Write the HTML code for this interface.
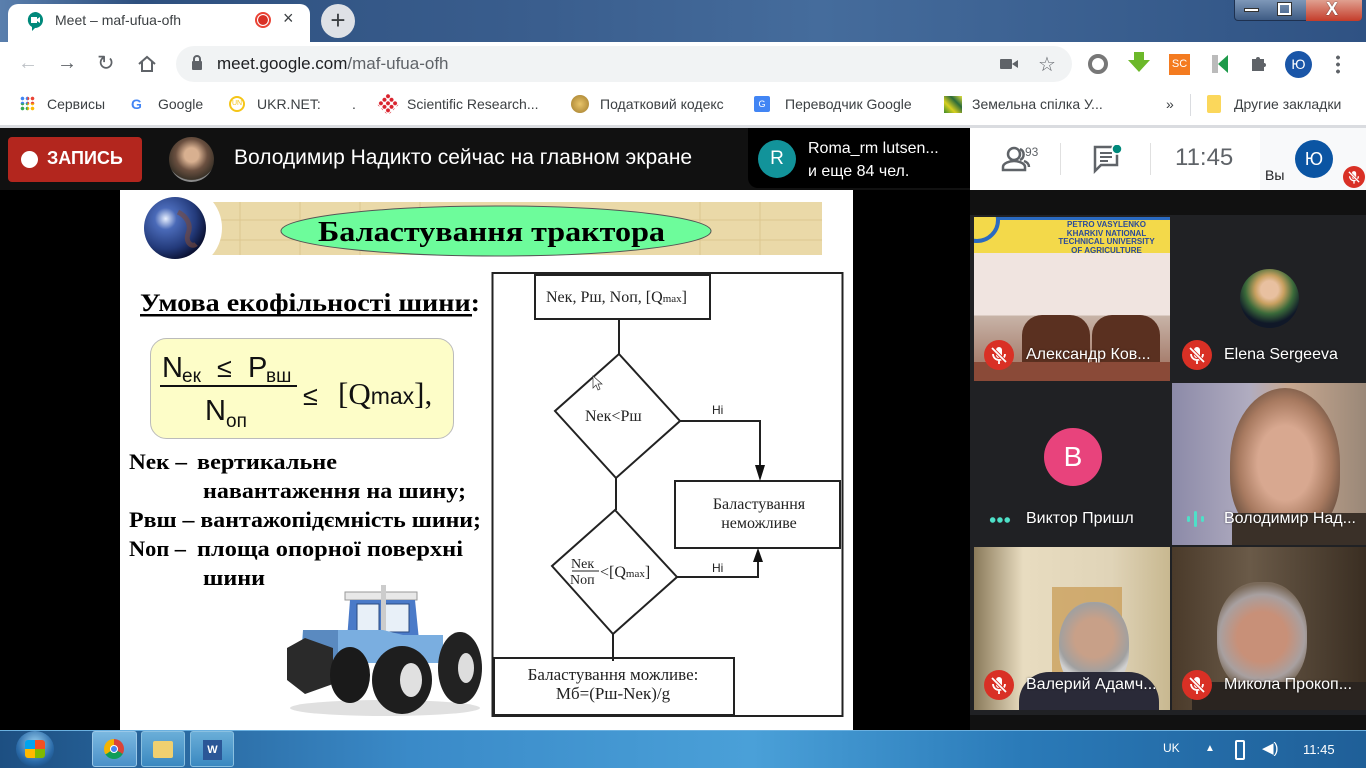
<!DOCTYPE html>
<html><head><meta charset="utf-8"><style>
*{margin:0;padding:0;box-sizing:border-box}
body{width:1366px;height:768px;overflow:hidden;position:relative;background:#000;font-family:"Liberation Sans",sans-serif}
.a{position:absolute}
.bm{position:absolute;top:96px;font-size:14px;color:#3c4043}
.tile{position:absolute;overflow:hidden}
.nm{position:absolute;color:#fff;font-size:16px;font-weight:500;white-space:nowrap;text-shadow:0 0 2px rgba(0,0,0,.5)}
.mic{position:absolute;width:30px;height:30px}
</style></head><body>
<svg width="0" height="0" style="position:absolute"><defs><g id="mic"><circle cx="15" cy="15" r="15" fill="#d93025"/><rect x="12" y="7" width="6" height="11" rx="3" fill="#fff"/><path d="M9 14a6 6 0 0 0 12 0M15 20v4" fill="none" stroke="#fff" stroke-width="1.8"/><path d="M8 8l14 14" stroke="#d93025" stroke-width="3.5"/><path d="M8 8l14 14" stroke="#fff" stroke-width="1.8"/></g></defs></svg>
<!-- tab strip -->
<div class="a" style="left:0;top:0;width:1366px;height:42px;background:linear-gradient(90deg,#5a7fad 0%,#2e507f 10%,#3a5e8e 40%,#456c9c 60%,#2f5283 100%)"></div>
<div class="a" style="left:8px;top:4px;width:302px;height:40px;background:#fff;border-radius:10px 10px 0 0"></div>
<svg class="a" style="left:26px;top:11px" width="18" height="20" viewBox="0 0 18 20"><path d="M9 1a8 8 0 0 1 0 16l-3 3v-4A8 8 0 0 1 9 1z" fill="#00897b"/><rect x="5" y="6" width="6" height="6" fill="#fff"/><path d="M11 8l3-2v6l-3-2z" fill="#fff"/></svg>
<div class="a" style="left:55px;top:12px;font-size:14px;color:#3c4043">Meet – maf-ufua-ofh</div>
<div class="a" style="left:255px;top:12px;width:16px;height:16px;border-radius:50%;border:2px solid #ea4335;background:radial-gradient(#d93025 55%,#fff 60%)"></div>
<div class="a" style="left:283px;top:8px;font-size:18px;color:#3c4043">×</div>
<div class="a" style="left:321px;top:4px;width:34px;height:34px;border-radius:50%;background:#dee1e6;text-align:center;font-size:26px;line-height:32px;color:#3c4043">+</div>
<div class="a" style="left:1234px;top:0;width:128px;height:21px;border:1px solid #1e3150;border-top:0;border-radius:0 0 4px 4px;background:linear-gradient(#7e97b8,#3e5b84)"></div>
<div class="a" style="left:1306px;top:0;width:56px;height:21px;border-radius:0 0 4px 0;background:linear-gradient(#e0a090,#c43c2a)"></div>
<div class="a" style="left:1244px;top:8px;width:15px;height:4px;background:#fff;border:1px solid #333"></div>
<div class="a" style="left:1278px;top:3px;width:13px;height:12px;border:2px solid #fff;outline:1px solid #333"></div>
<div class="a" style="left:1326px;top:-1px;font-size:18px;font-weight:bold;color:#fff;text-shadow:0 0 1px #000">X</div>
<!-- address row -->
<div class="a" style="left:0;top:42px;width:1366px;height:86px;background:#fff"></div>
<div class="a" style="left:18px;top:52px;font-size:20px;color:#bdc1c6">←</div>
<div class="a" style="left:57px;top:52px;font-size:20px;color:#5f6368">→</div>
<div class="a" style="left:97px;top:51px;font-size:21px;color:#5f6368">↻</div>
<svg class="a" style="left:137px;top:55px" width="20" height="18"><path d="M2 9L10 2l8 7M5 7v9h10V7" fill="none" stroke="#5f6368" stroke-width="2"/></svg>
<div class="a" style="left:176px;top:46px;width:896px;height:36px;border-radius:18px;background:#f1f3f4"></div>
<svg class="a" style="left:191px;top:55px" width="12" height="16"><rect x="1" y="6" width="10" height="9" rx="1" fill="#5f6368"/><path d="M3 7V4a3 3 0 0 1 6 0v3" fill="none" stroke="#5f6368" stroke-width="2"/></svg>
<div class="a" style="left:217px;top:54px;font-size:17px;color:#202124">meet.google.com<span style="color:#5f6368">/maf-ufua-ofh</span></div>
<svg class="a" style="left:1000px;top:58px" width="18" height="12"><rect x="0" y="1" width="12" height="10" rx="1" fill="#5f6368"/><path d="M12 6l6-4v8z" fill="#5f6368"/></svg>
<div class="a" style="left:1038px;top:52px;font-size:20px;color:#5f6368">☆</div>
<div class="a" style="left:1088px;top:54px;width:20px;height:20px;border-radius:50%;border:4px solid #777"></div>
<svg class="a" style="left:1128px;top:52px" width="22" height="22"><path d="M6 0h10v8h6L11 20 0 8h6z" fill="#6cb82a"/></svg>
<div class="a" style="left:1169px;top:54px;width:21px;height:21px;background:#f47b20;color:#fff;font-size:11px;text-align:center;line-height:21px">SC</div>
<svg class="a" style="left:1210px;top:53px" width="20" height="22"><path d="M2 2h6v18H2z" fill="#bbb"/><path d="M8 11l10-9v18z" fill="#1e9a4a"/></svg>
<svg class="a" style="left:1250px;top:54px" width="18" height="18"><path d="M2 5h4a2 2 0 0 1 4 0h4v4a2 2 0 0 1 0 4v4H2z" fill="#5f6368"/></svg>
<div class="a" style="left:1285px;top:51px;width:27px;height:27px;border-radius:50%;background:#1a56a8;color:#fff;font-size:14px;text-align:center;line-height:27px">Ю</div>
<div class="a" style="left:1336px;top:54px;width:4px;height:20px;background:radial-gradient(circle,#5f6368 1.8px,transparent 2px) 0 0/4px 7px"></div>
<!-- bookmarks -->
<div class="a" style="left:20px;top:96px;width:15px;height:15px;background:conic-gradient(#ea4335 0 25%,#fbbc04 0 50%,#34a853 0 75%,#4285f4 0);-webkit-mask:radial-gradient(circle,#000 1.6px,transparent 2px) 0 0/5px 5px"></div>
<div class="bm" style="left:47px">Сервисы</div>
<div class="bm" style="left:131px;font-weight:bold;color:#4285f4">G</div>
<div class="bm" style="left:158px">Google</div>
<div class="a" style="left:229px;top:96px;width:16px;height:16px;border-radius:50%;border:2px solid #f5c518;font-size:7px;color:#f5c518;text-align:center;line-height:12px">UN</div>
<div class="bm" style="left:257px">UKR.NET:</div>
<div class="bm" style="left:352px">.</div>
<div class="a" style="left:380px;top:96px;width:16px;height:16px;background:radial-gradient(circle,#d9232d 1.8px,transparent 2.2px) 0 0/5px 5px;transform:rotate(45deg)"></div>
<div class="bm" style="left:407px">Scientific Research...</div>
<div class="a" style="left:571px;top:95px;width:18px;height:18px;border-radius:50%;background:radial-gradient(#e8c46a,#a07a2a)"></div>
<div class="bm" style="left:600px">Податковий кодекс</div>
<div class="a" style="left:754px;top:96px;width:16px;height:16px;background:#4285f4;border-radius:2px;color:#fff;font-size:9px;line-height:16px;text-align:center">G</div>
<div class="bm" style="left:785px">Переводчик Google</div>
<div class="a" style="left:944px;top:96px;width:18px;height:17px;background:linear-gradient(45deg,#3a8a2a,#d8d020,#2a6a3a,#e0e040)"></div>
<div class="bm" style="left:972px">Земельна спілка У...</div>
<div class="bm" style="left:1166px">»</div>
<div class="a" style="left:1190px;top:94px;width:1px;height:22px;background:#dadce0"></div>
<div class="a" style="left:1207px;top:95px;width:14px;height:18px;background:#fbd75b;border-radius:2px"></div>
<div class="bm" style="left:1234px">Другие закладки</div>
<div class="a" style="left:0;top:125px;width:1366px;height:3px;background:#dadce0"></div>
<!-- meet top bar -->
<div class="a" style="left:0;top:128px;width:1366px;height:62px;background:#111"></div>
<div class="a" style="left:8px;top:137px;width:134px;height:45px;border-radius:4px;background:#b3261e"></div>
<div class="a" style="left:21px;top:151px;width:17px;height:17px;border-radius:50%;background:#fff"></div>
<div class="a" style="left:47px;top:148px;font-size:18px;font-weight:bold;color:#fff">ЗАПИСЬ</div>
<div class="a" style="left:169px;top:137px;width:45px;height:45px;border-radius:50%;background:radial-gradient(circle at 50% 40%,#d8b090 20%,#6b5040 45%,#3a3228 70%,#8a8a8a 72%)"></div>
<div class="a" style="left:234px;top:146px;font-size:21px;color:#fff">Володимир Надикто сейчас на главном экране</div>
<div class="a" style="left:748px;top:128px;width:222px;height:60px;background:#000;border-radius:0 0 0 10px"></div>
<div class="a" style="left:758px;top:140px;width:38px;height:38px;border-radius:50%;background:#12939a;color:#fff;font-size:19px;text-align:center;line-height:38px">R</div>
<div class="a" style="left:808px;top:137px;font-size:16px;color:#fff;line-height:23px">Roma_rm lutsen...<br>и еще 84 чел.</div>
<div class="a" style="left:970px;top:128px;width:290px;height:62px;background:#fff"></div>
<div class="a" style="left:1260px;top:128px;width:106px;height:62px;background:#f8f9fa"></div>
<svg class="a" style="left:1000px;top:145px" width="44" height="28"><circle cx="14" cy="9" r="6" fill="none" stroke="#5f6368" stroke-width="2.5"/><path d="M3 25v-3c0-4 7-6 11-6s11 2 11 6v3z" fill="none" stroke="#5f6368" stroke-width="2.5"/><path d="M20 4a6 6 0 0 1 0 11M24 16c3 1 5 3 5 6" fill="none" stroke="#5f6368" stroke-width="2.5"/><text x="25" y="11" font-size="12" fill="#5f6368" font-family="Liberation Sans">93</text></svg>
<div class="a" style="left:1060px;top:143px;width:1px;height:32px;background:#e0e0e0"></div>
<svg class="a" style="left:1093px;top:145px" width="30" height="30"><path d="M2 2h22v18H8l-6 6z" fill="none" stroke="#5f6368" stroke-width="2.5"/><path d="M7 8h12M7 12h12M7 16h8" stroke="#5f6368" stroke-width="2"/><circle cx="24" cy="4" r="5" fill="#00897b" stroke="#fff" stroke-width="1.5"/></svg>
<div class="a" style="left:1150px;top:143px;width:1px;height:32px;background:#e0e0e0"></div>
<div class="a" style="left:1175px;top:144px;font-size:24px;color:#5f6368">11:45</div>
<div class="a" style="left:1295px;top:140px;width:38px;height:38px;border-radius:50%;background:#0b55a3;color:#fff;font-size:18px;text-align:center;line-height:38px">Ю</div>
<div class="a" style="left:1265px;top:167px;font-size:14px;color:#202124">Вы</div>
<svg class="mic" style="left:1343px;top:166px;width:22px;height:22px" viewBox="0 0 30 30"><use href="#mic"/></svg>
<!-- right panel -->
<div class="a" style="left:970px;top:190px;width:396px;height:540px;background:#111"></div>
<div class="a" style="left:970px;top:215px;width:396px;height:500px;background:#202124"></div>
<div class="tile" style="left:974px;top:217px;width:196px;height:164px;background:linear-gradient(#f0e4e0 0 60%,#c8b4a8 60%,#9a6a58 100%)">
 <div class="a" style="left:0;top:0;width:196px;height:36px;background:#f3d94a;border-top:3px solid #2a6ac0"></div>
 <div class="a" style="left:-20px;top:-20px;width:46px;height:46px;border-radius:50%;border:4px solid #2a6ac0;background:#f3d94a"></div>
 <div class="a" style="left:70px;top:4px;width:125px;font-size:8px;line-height:8.5px;font-weight:bold;color:#2a4a9a;text-align:center">PETRO VASYLENKO<br>KHARKIV NATIONAL<br>TECHNICAL UNIVERSITY<br>OF AGRICULTURE</div>
 <div class="a" style="left:48px;top:98px;width:68px;height:50px;background:#5a3020;border-radius:20px 20px 0 0"></div>
 <div class="a" style="left:118px;top:98px;width:68px;height:50px;background:#5a3020;border-radius:20px 20px 0 0"></div>
 <div class="a" style="left:0;top:145px;width:196px;height:19px;background:#8a4a38"></div>
</div>
<div class="tile" style="left:1172px;top:217px;width:194px;height:164px;background:#202124">
 <div class="a" style="left:68px;top:52px;width:59px;height:59px;border-radius:50%;background:radial-gradient(circle at 50% 35%,#e8c0a0 18%,#c8a060 30%,#3a6a3a 50%,#101828 70%)"></div>
</div>
<div class="tile" style="left:974px;top:383px;width:196px;height:162px;background:#202124">
 <div class="a" style="left:70px;top:45px;width:58px;height:58px;border-radius:50%;background:#e8437c;color:#fff;font-size:28px;text-align:center;line-height:58px">В</div>
</div>
<div class="tile" style="left:1172px;top:383px;width:194px;height:162px;background:linear-gradient(90deg,#8c8aa8,#b0acc0 40%,#c8a890 60%,#9a8878)">
 <div class="a" style="left:58px;top:5px;width:110px;height:150px;border-radius:50% 50% 40% 40%;background:radial-gradient(ellipse at 50% 50%,#d8a890 35%,#a87a60 60%,#6a5040 80%)"></div>
 <div class="a" style="left:60px;top:130px;width:134px;height:32px;background:#3a3028"></div>
</div>
<div class="tile" style="left:974px;top:547px;width:196px;height:163px;background:linear-gradient(90deg,#8a7a5a,#e8dcc0 25%,#e0d4b8 70%,#c8b890)">
 <div class="a" style="left:78px;top:40px;width:70px;height:90px;background:#c89850;opacity:.7"></div>
 <div class="a" style="left:85px;top:55px;width:70px;height:90px;border-radius:45%;background:radial-gradient(circle at 50% 40%,#c8a088 30%,#a0a0a0 55%,#d0d0d0 65%)"></div>
 <div class="a" style="left:45px;top:125px;width:140px;height:38px;background:#2a2a38;border-radius:30px 30px 0 0"></div>
</div>
<div class="tile" style="left:1172px;top:547px;width:194px;height:163px;background:linear-gradient(90deg,#4a3a2a,#6a5a48 40%,#3a2e22)">
 <div class="a" style="left:45px;top:35px;width:90px;height:110px;border-radius:45%;background:radial-gradient(circle at 50% 50%,#c89078 35%,#a8a0a0 60%,#7a6a5a 75%)"></div>
 <div class="a" style="left:20px;top:135px;width:174px;height:28px;background:#2a2420"></div>
</div>
<svg class="mic" style="left:984px;top:340px" viewBox="0 0 30 30"><use href="#mic"/></svg><div class="nm" style="left:1026px;top:346px">Александр Ков...</div>
<svg class="mic" style="left:1182px;top:340px" viewBox="0 0 30 30"><use href="#mic"/></svg><div class="nm" style="left:1224px;top:346px">Elena Sergeeva</div>
<div class="a" style="left:989px;top:517px;width:22px;height:6px;background:radial-gradient(circle,#4ee0c8 2.5px,transparent 3px) 0 0/7.3px 6px"></div>
<div class="nm" style="left:1026px;top:510px">Виктор Пришл</div>
<svg class="a" style="left:1186px;top:509px" width="20" height="20"><rect x="1" y="7" width="3" height="6" rx="1.5" fill="#4ee0c8"/><rect x="8" y="2" width="3" height="16" rx="1.5" fill="#4ee0c8"/><rect x="15" y="7" width="3" height="6" rx="1.5" fill="#4ee0c8"/></svg>
<div class="nm" style="left:1224px;top:510px">Володимир Над...</div>
<svg class="mic" style="left:984px;top:670px" viewBox="0 0 30 30"><use href="#mic"/></svg><div class="nm" style="left:1026px;top:676px">Валерий Адамч...</div>
<svg class="mic" style="left:1182px;top:670px" viewBox="0 0 30 30"><use href="#mic"/></svg><div class="nm" style="left:1224px;top:676px">Микола Прокоп...</div>
<!-- slide -->
<div class="a" style="left:120px;top:190px;width:733px;height:542px;background:#fff"></div>
<svg class="a" style="left:120px;top:190px" width="733" height="542" viewBox="120 190 733 542" font-family="Liberation Serif, serif">
 <defs><radialGradient id="gl" cx="0.35" cy="0.35" r="0.7"><stop offset="0" stop-color="#e8f0ff"/><stop offset="0.25" stop-color="#4a6ab8"/><stop offset="0.7" stop-color="#233a7a"/><stop offset="1" stop-color="#0a1030"/></radialGradient></defs>
 <rect x="208" y="202" width="614" height="53" fill="#ead9a8"/>
 <path d="M240 202v53M300 202v53M360 202v53M420 202v53M700 202v53M760 202v53M208 220h614M208 240h614" stroke="#dcc690" stroke-width="1"/>
 <circle cx="180" cy="228" r="42" fill="#fff"/>
 <circle cx="175" cy="228" r="31" fill="url(#gl)"/>
 <path d="M178 212c8 4 14 12 10 22-3 8 4 14 8 10" fill="none" stroke="#7a4a3a" stroke-width="5" opacity=".6"/>
 <ellipse cx="496" cy="231" rx="215" ry="25" fill="#6dfc9b" stroke="#555" stroke-width="1"/>
 <text x="318" y="241" font-size="29" font-weight="bold" textLength="347" lengthAdjust="spacingAndGlyphs">Баластування трактора</text>
 <text x="140" y="311" font-size="25" font-weight="bold" textLength="340" lengthAdjust="spacingAndGlyphs">Умова екофільності шини:</text>
 <rect x="140" y="314" width="332" height="2.5" fill="#000"/>
 <rect x="150.5" y="338.5" width="303" height="100" rx="16" fill="#fdfdc8" stroke="#bbb"/>
 <g font-family="Liberation Sans, sans-serif" fill="#111">
  <text x="162" y="377" font-size="29">N</text><text x="182" y="382" font-size="19">ек</text>
  <text x="217" y="377" font-size="27">≤</text>
  <text x="248" y="377" font-size="29">P</text><text x="266" y="382" font-size="19">вш</text>
  <rect x="160" y="385" width="137" height="2" fill="#111"/>
  <text x="205" y="420" font-size="29">N</text><text x="226" y="427" font-size="19">оп</text>
  <text x="303" y="405" font-size="27">≤</text>
 </g>
 <text x="338" y="404" font-size="31" fill="#111">[Q<tspan font-size="23" font-family="Liberation Sans, sans-serif">max</tspan>],</text>
 <g font-size="22" font-weight="bold">
  <text x="129" y="469" textLength="58" lengthAdjust="spacingAndGlyphs">Nек –</text>
  <text x="197" y="469" textLength="140" lengthAdjust="spacingAndGlyphs">вертикальне</text>
  <text x="203" y="498" textLength="263" lengthAdjust="spacingAndGlyphs">навантаження на шину;</text>
  <text x="129" y="527" textLength="352" lengthAdjust="spacingAndGlyphs">Pвш – вантажопідємність шини;</text>
  <text x="129" y="556" textLength="57" lengthAdjust="spacingAndGlyphs">Nоп –</text>
  <text x="197" y="556" textLength="266" lengthAdjust="spacingAndGlyphs">площа опорної поверхні</text>
  <text x="203" y="585" textLength="62" lengthAdjust="spacingAndGlyphs">шини</text>
 </g>
 <!-- tractor -->
 <ellipse cx="385" cy="708" rx="95" ry="8" fill="#ccc" opacity=".6"/>
 <rect x="345" y="592" width="72" height="8" fill="#e8e8e8" stroke="#999"/>
 <path d="M350 600h65l4 40h-72z" fill="#4a7ac8"/>
 <path d="M357 604h22v28h-22zM384 604h25v28h-25z" fill="#e8f0f8" stroke="#2a4a80"/>
 <rect x="381" y="585" width="5" height="55" fill="#ccc"/>
 <path d="M303 630h80l20 5h40v28H300z" fill="#7aaee0"/>
 <path d="M303 630h35v30h-35z" fill="#5a8ac0"/>
 <path d="M287 648l18-10 28 10v36l-28 10-18-14z" fill="#2a2a2a"/>
 <ellipse cx="460" cy="668" rx="22" ry="36" fill="#222"/><ellipse cx="466" cy="668" rx="8" ry="15" fill="#ddd"/>
 <ellipse cx="350" cy="675" rx="20" ry="28" fill="#1a1a1a"/>
 <ellipse cx="402" cy="680" rx="30" ry="34" fill="#1e1e1e"/><ellipse cx="411" cy="680" rx="11" ry="17" fill="#e0e0e0"/>
 <!-- flowchart -->
 <g fill="none" stroke="#222" stroke-width="2">
  <rect x="492.5" y="273" width="350" height="443"/>
  <rect x="535" y="275" width="175" height="44"/>
  <path d="M619 319v35M619 354L680 421 616 478 555 411z"/>
  <path d="M680 421h80v50"/>
  <rect x="675" y="481" width="165" height="67"/>
  <path d="M616 478v32M615 510L677 577 613 634 552 566z"/>
  <path d="M677 577h81v-20"/>
  <path d="M613 634v27"/>
  <rect x="494" y="658" width="240" height="57"/>
  <path d="M572 571h27" stroke-width="1"/>
 </g>
 <path d="M755 465h10l-5 16z M753 562h10l-5-14z" fill="#111"/>
 <g font-size="16" fill="#222">
  <text x="546" y="302" textLength="141" lengthAdjust="spacingAndGlyphs">Nек, Pш, Nоп, [Q<tspan font-size="11">max</tspan>]</text>
  <text x="585" y="421">Nек&lt;Pш</text>
  <text x="759" y="509" text-anchor="middle">Баластування</text>
  <text x="759" y="528" text-anchor="middle">неможливе</text>
  <text x="571" y="568" font-size="14">Nек</text>
  <text x="570" y="584" font-size="14">Nоп</text>
  <text x="600" y="577">&lt;[Q<tspan font-size="11">max</tspan>]</text>
  <text x="613" y="680" text-anchor="middle" font-size="17">Баластування можливе:</text>
  <text x="613" y="699" text-anchor="middle" font-size="17">Mб=(Pш-Nек)/g</text>
 </g>
 <g font-family="Liberation Sans, sans-serif" font-size="12" fill="#222"><text x="712" y="414">Hi</text><text x="712" y="572">Hi</text></g>
 <path d="M593 376v12l3-3 2 5 2-1-2-5h4z" fill="#fff" stroke="#333" stroke-width=".7"/>
</svg>
<!-- taskbar -->
<div class="a" style="left:0;top:730px;width:1366px;height:38px;background:linear-gradient(90deg,#1d4f82,#3a8ac8 30%,#4aa0d8 55%,#2a7ab8 75%,#1f5f98);border-top:1px solid #6ab0e0"></div>
<div class="a" style="left:16px;top:731px;width:38px;height:36px;border-radius:50%;background:radial-gradient(circle at 50% 35%,#9ad0f0,#2a6aa8 60%,#0e3a68)"></div>
<div class="a" style="left:25px;top:740px;width:20px;height:18px;background:conic-gradient(#f25022 0 25%,#7fba00 0 50%,#ffb900 0 75%,#00a4ef 0);border-radius:3px"></div>
<div class="a" style="left:92px;top:731px;width:45px;height:36px;border:1px solid #9ac8e8;border-radius:3px;background:linear-gradient(#7ab8e0,#4a90c8)"></div>
<div class="a" style="left:104px;top:739px;width:20px;height:20px;border-radius:50%;background:conic-gradient(#db4437 0 33%,#0f9d58 0 66%,#f4b400 0);"></div>
<div class="a" style="left:110px;top:745px;width:8px;height:8px;border-radius:50%;background:#4285f4;border:1px solid #fff"></div>
<div class="a" style="left:141px;top:731px;width:44px;height:36px;border:1px solid #8ac0e0;border-radius:3px;background:linear-gradient(#6aaed8,#3a88c0)"></div>
<div class="a" style="left:153px;top:741px;width:20px;height:17px;background:#f0d070;border-radius:2px"></div>
<div class="a" style="left:190px;top:731px;width:44px;height:36px;border:1px solid #8ac0e0;border-radius:3px;background:linear-gradient(#6aaed8,#3a88c0)"></div>
<div class="a" style="left:203px;top:740px;width:19px;height:20px;background:#2b5797;color:#fff;font-size:11px;font-weight:bold;text-align:center;line-height:20px">W</div>
<div class="a" style="left:1163px;top:741px;font-size:12px;color:#fff">UK</div>
<div class="a" style="left:1205px;top:743px;font-size:10px;color:#fff">▲</div>
<div class="a" style="left:1235px;top:740px;width:10px;height:20px;border:2px solid #fff;border-radius:2px"></div>
<div class="a" style="left:1262px;top:739px;font-size:15px;color:#fff">◀)</div>
<div class="a" style="left:1303px;top:742px;font-size:13px;color:#fff">11:45</div>
</body></html>
